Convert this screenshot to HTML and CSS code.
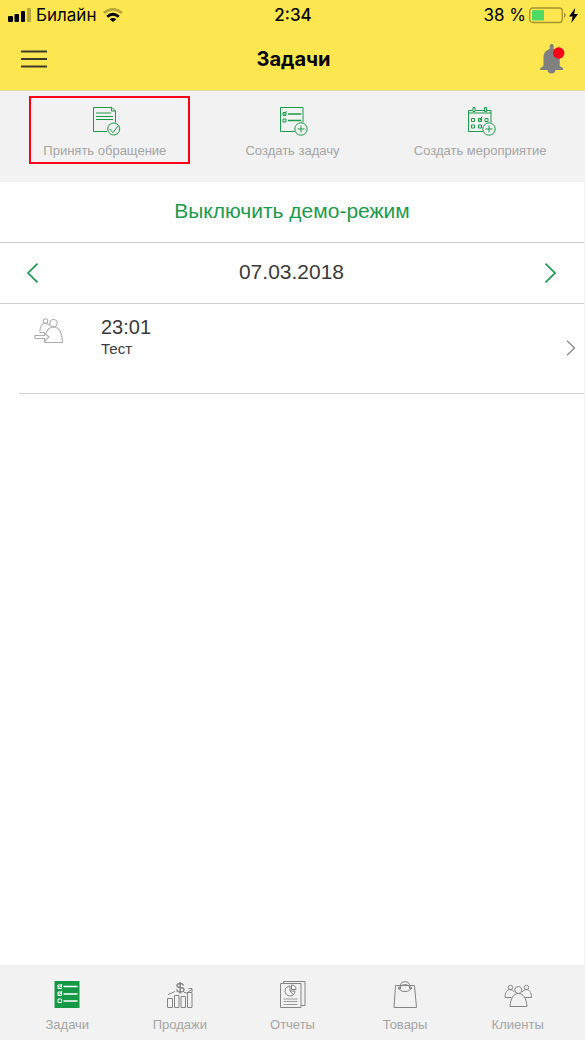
FILE: index.html
```html
<!DOCTYPE html>
<html lang="ru">
<head>
<meta charset="utf-8">
<meta name="viewport" content="width=device-width, initial-scale=1">
<title>Задачи</title>
<link rel="stylesheet" href="styles.css">
</head>
<body>
<div class="app">
  <header class="header">
    <div class="status">
      <div class="status-side">
        <svg class="signal" width="24" height="14" viewBox="0 0 24 14" aria-hidden="true"><rect x="0" y="8" width="5" height="6" rx="1"/><rect x="6.500" y="6" width="4.500" height="8" rx="1"/><rect x="13" y="3" width="4" height="11" rx="1"/><rect x="19" y="0" width="4" height="14" rx="1" opacity=".27"/></svg>
        <span>Билайн</span>
        <svg class="wifi" width="20" height="14" viewBox="0 0 20 14" fill="none" stroke="#000" stroke-width="2.700" aria-hidden="true"><path d="M1 5Q10-2.500 19 5" opacity=".27"/><path d="M4.200 8.800Q10 3.700 15.800 8.800"/><path d="M6.700 11.300Q10 8.600 13.300 11.300L10 14Z" fill="#000" stroke="none"/></svg>
      </div>
      <span class="clock">2:34</span>
      <div class="status-side status-end">
        <span>38&nbsp;%</span>
        <svg class="battery" width="37" height="17" viewBox="0 0 37 17" fill="none" aria-hidden="true"><rect x=".75" y="1" width="32.500" height="14.500" rx="3" stroke="#a2932f" stroke-width="1.300"/><rect x="3" y="3.200" width="12" height="10.200" fill="#4cd964"/><path d="M35 5.500q1.700.5 1.700 2.700T35 11z" fill="#a2932f"/></svg>
        <svg class="bolt" width="9" height="15" viewBox="0 0 9 15" aria-hidden="true"><path d="M6.200 0L0 8.400h3.600L2.300 15 9 6H5.200z"/></svg>
      </div>
    </div>
    <div class="title-bar">
      <button class="icon-button" type="button" aria-label="Меню"><svg width="26" height="18" viewBox="0 0 26 18" stroke="#3c3a2c" stroke-width="2"><path d="M0 1.500h26M0 9h26M0 16.500h26"/></svg></button>
      <h1 class="title">Задачи</h1>
      <button class="icon-button bell" type="button" aria-label="Уведомления"><svg width="26" height="32" viewBox="0 0 26 32"><path d="M9.700 6V3q0-2 2-2t2 2v3q6 2 6 8v9l3.300 2v2h-7.500q-.5 3.500-4 3.500t-4-3.500H.3v-2L3.500 23v-9q0-6 6.200-8z" fill="#808080"/><circle cx="18.700" cy="10" r="5.700" fill="#ff0018"/></svg></button>
    </div>
  </header>

  <section class="actions">
    <button class="action" type="button">
      <span class="highlight"></span>
      <svg width="32" height="30" viewBox="0 0 32 30" fill="none" stroke="#1a9b4b"><path d="M18 25.500H4.500v-24H23L26.500 5v11.500M22.500 1.500V5h4"/><path d="M7 7h15M7 10.500h17M7 13.500h17" stroke-width="1.200"/><circle cx="24.700" cy="23" r="6"/><path d="M20.500 23l3.500 3.500 5-6.500"/></svg>
      <span>Принять обращение</span>
    </button>
    <button class="action" type="button">
      <svg width="32" height="30" viewBox="0 0 32 30" fill="none" stroke="#1a9b4b"><path d="M19 25.500H4.500v-24h22.500v15"/><path d="M12 8h13M12 14.500h13" stroke-width="1.300"/><path d="M7 6.500h3v3H7zM7 13h3v3H7zM7.500 7.500l1 1L10.500 5"/><circle cx="25" cy="23" r="6.200"/><path d="M21.500 23h7M25 19.500v7"/></svg>
      <span>Создать задачу</span>
    </button>
    <button class="action" type="button">
      <svg width="32" height="30" viewBox="0 0 32 30" fill="none" stroke="#1a9b4b"><path d="M19 25.500H4.500v-21h4M11.500 4.500H20M23 4.500h4v12M4.500 7H27M9 1.500h2v4H9zM20.500 1.500h2v4h-2z"/><path d="M7.500 12.500h3v3h-3zM14.500 12.500h3v3h-3zM21 12.500h3v3h-3zM7.500 19h3v3h-3zM14.500 19h3v3h-3zM15 13.500l1 1 2-4"/><circle cx="25" cy="23" r="6.200"/><path d="M21.500 23h7M25 19.500v7"/></svg>
      <span>Создать мероприятие</span>
    </button>
  </section>

  <main class="content">
    <button class="demo" type="button">Выключить демо-режим</button>
    <div class="date-bar">
      <button class="icon-button" type="button" aria-label="Предыдущий день"><svg width="13" height="20" viewBox="0 0 13 20" fill="none" stroke="#1a9b4b" stroke-width="1.700"><path d="M11.500 .7L2 10l9.500 9.300"/></svg></button>
      <span class="date">07.03.2018</span>
      <button class="icon-button" type="button" aria-label="Следующий день"><svg width="13" height="20" viewBox="0 0 13 20" fill="none" stroke="#1a9b4b" stroke-width="1.700"><path d="M1.500 .7L11 10l-9.500 9.300"/></svg></button>
    </div>
    <a class="task" href="#task">
      <svg class="task-icon" width="30" height="26" viewBox="0 0 30 26" fill="none" stroke="#adadad" stroke-width="1.100"><circle cx="11.500" cy="3" r="2.300"/><circle cx="19.500" cy="5.200" r="3.700"/><path d="M5.800 14.500C5.800 8.500 8 5.500 11.500 5.500q2.500 0 4.300 2M5.800 14.500H11M10.500 24.500h18c0-8.500-3-15.500-9-15.500-3.500 0-6 2.500-7.500 6M10.500 24.500l1-2M1 17.500h9.500v-2.500l4.500 4-4.500 4V20.500H1z"/></svg>
      <span class="task-text"><span class="task-time">23:01</span><span class="task-name">Тест</span></span>
      <svg class="task-arrow" width="10" height="16" viewBox="0 0 10 16" fill="none" stroke="#8c8c8c" stroke-width="1.400"><path d="M1 .7L8.500 8 1 15.300"/></svg>
    </a>
  </main>

  <nav class="tabs">
    <a class="tab" href="#tasks"><svg width="30" height="28" viewBox="0 0 30 28" fill="none" stroke="#fff"><path d="M2.500 0h25v27h-25z" fill="#159947" stroke="none"/><path d="M11.500 5.500h14M11.500 13h14M11.500 20h14" stroke-width="1.300"/><path d="M6 4h3.500v3.500H6zM6 11h3.500v3.500H6zM6 18h3.500v3.500H6zM6 5l1.500 1.500L10 3M6 12l1.500 1.500L10 10"/></svg><span>Задачи</span></a>
    <a class="tab" href="#sales"><svg width="30" height="28" viewBox="0 0 30 28" fill="none" stroke="#858585"><path d="M2.500 26.500v-9h5v9zM9.500 26.500v-12h4.500v12zM16 26.500v-11h4.500v11zM22.500 26.500v-15H27v15zM3 13.500l7-3M19 11.500l3 .5 5-4M23.500 7.500H27V11"/><path d="M18.500 4.500Q18 2.500 15.200 2.500c-4.500 0-4 4 0 4 5 0 5 4.500 0 4.500Q12 11 11.700 8.500M15.200 1v11.500" stroke-width="1.500"/></svg><span>Продажи</span></a>
    <a class="tab" href="#reports"><svg width="30" height="28" viewBox="0 0 30 28" fill="none" stroke="#858585"><path d="M3.500 2.500H24v24H3.500zM6.500 2.500v-2H28v24h-4"/><path d="M6.500 18h14M6.500 20.500h14M6.500 23.500h14" stroke-width=".8"/><path d="M13 5a5 5 0 1 0 5 5h-5zM14.500 4v4.500H19Q19 4 14.500 4zM13 10l3 3.500"/></svg><span>Отчеты</span></a>
    <a class="tab" href="#goods"><svg width="30" height="28" viewBox="0 0 30 28" fill="none" stroke="#858585"><path d="M5.500 4.500h19L26.500 26.500h-22.500zM10 4.500Q11 .5 15 .5t5 4M9.500 7q0 3.500 5.500 3.500T20.500 7M9.500 7Q11 3.500 15 3.500T20.500 7"/><circle cx="9.500" cy="7" r="1.200"/><circle cx="20.500" cy="7" r="1.200"/></svg><span>Товары</span></a>
    <a class="tab" href="#clients"><svg width="30" height="28" viewBox="0 0 30 28" fill="none" stroke="#858585"><circle cx="7.500" cy="6.500" r="2.200"/><circle cx="23.500" cy="6.500" r="2.200"/><circle cx="15.300" cy="9" r="3.500"/><path d="M8.500 16.500H2c0-5.500 2.500-8 5-8q2.500 0 4.500 2.500M22 16.500h6.500c0-5.500-2.500-8-5-8Q21 8.500 19 11M7 25.500h17c-.5-8-3.500-13-8.500-13S7.500 17.500 7 25.500z"/></svg><span>Клиенты</span></a>
  </nav>
</div>
</body>
</html>
```
FILE: styles.css
```css
* {
  box-sizing: border-box;
}

body {
  margin: 0;
  background: #fff;
  color: #3a3a3a;
  font-family: "Liberation Sans", Arial, sans-serif;
}

button {
  margin: 0;
  padding: 0;
  border: 0;
  background: none;
  color: inherit;
  font: inherit;
  cursor: pointer;
}

a {
  color: inherit;
  text-decoration: none;
}

svg {
  display: block;
  flex: none;
}

.app {
  display: flex;
  flex-direction: column;
  min-height: 100vh;
}

.header {
  background: #fde64f;
  border-bottom: 1px solid #e4dba6;
  color: #000;
  font-family: Inter, "Liberation Sans", sans-serif;
}

.status {
  display: grid;
  grid-template-columns: 1fr auto 1fr;
  align-items: center;
  height: 30px;
  padding: 0 7px 0 8px;
  font-size: 17px;
}

.status-side {
  display: flex;
  align-items: center;
  gap: 4px;
}

.status-end {
  justify-content: flex-end;
  gap: 3px;
}

.wifi {
  margin-left: 3px;
}

.clock {
  font-weight: 500;
}

.title-bar {
  display: grid;
  grid-template-columns: 1fr auto 1fr;
  align-items: center;
  height: 60px;
  padding: 0 19px 2px 21px;
}

.title {
  margin: 0;
  font-size: 20px;
  font-weight: 700;
}

.icon-button {
  justify-self: start;
}

.bell {
  justify-self: end;
}

.actions {
  display: grid;
  grid-template-columns: repeat(3, 1fr);
  padding: 0 11px;
  background: #f2f2f2;
  color: #a5a5a5;
  font-size: 13px;
}

.action {
  position: relative;
  display: flex;
  flex-direction: column;
  align-items: center;
  gap: 7px;
  height: 91px;
  padding-top: 15px;
  line-height: 16px;
}

.highlight {
  position: absolute;
  top: 5px;
  right: 9px;
  left: 18px;
  height: 68px;
  border: 2px solid #ff0018;
}

.content {
  flex: 1;
  border-right: 1px solid #f2f2f2;
}

.demo {
  width: 100%;
  height: 61px;
  padding-bottom: 3px;
  border-bottom: 1px solid #c8c8c8;
  color: #1a9b4b;
  font-size: 21px;
}

.date-bar {
  display: flex;
  align-items: center;
  justify-content: space-between;
  height: 61px;
  padding: 0 27px 0 26px;
  border-bottom: 1px solid #d0d0d0;
}

.date {
  padding-bottom: 2px;
  font-size: 21px;
}

.task {
  display: flex;
  align-items: flex-start;
  height: 90px;
  margin-left: 19px;
  padding: 11px 8px 0 15px;
  border-bottom: 1px solid #d0d0d0;
}

.task-icon {
  margin-top: 3px;
}

.task-text {
  display: flex;
  flex: 1;
  flex-direction: column;
  margin-left: 37px;
}

.task-time {
  font-size: 20px;
  line-height: 24px;
}

.task-name {
  font-size: 15px;
  line-height: 20px;
}

.task-arrow {
  margin-top: 25px;
}

.tabs {
  display: grid;
  grid-template-columns: repeat(5, 1fr);
  height: 75px;
  padding: 0 11px;
  background: #f2f2f2;
  color: #a5a5a5;
  font-size: 13px;
}

.tab {
  display: flex;
  flex-direction: column;
  align-items: center;
  gap: 8px;
  padding-top: 16px;
  line-height: 16px;
}
```
